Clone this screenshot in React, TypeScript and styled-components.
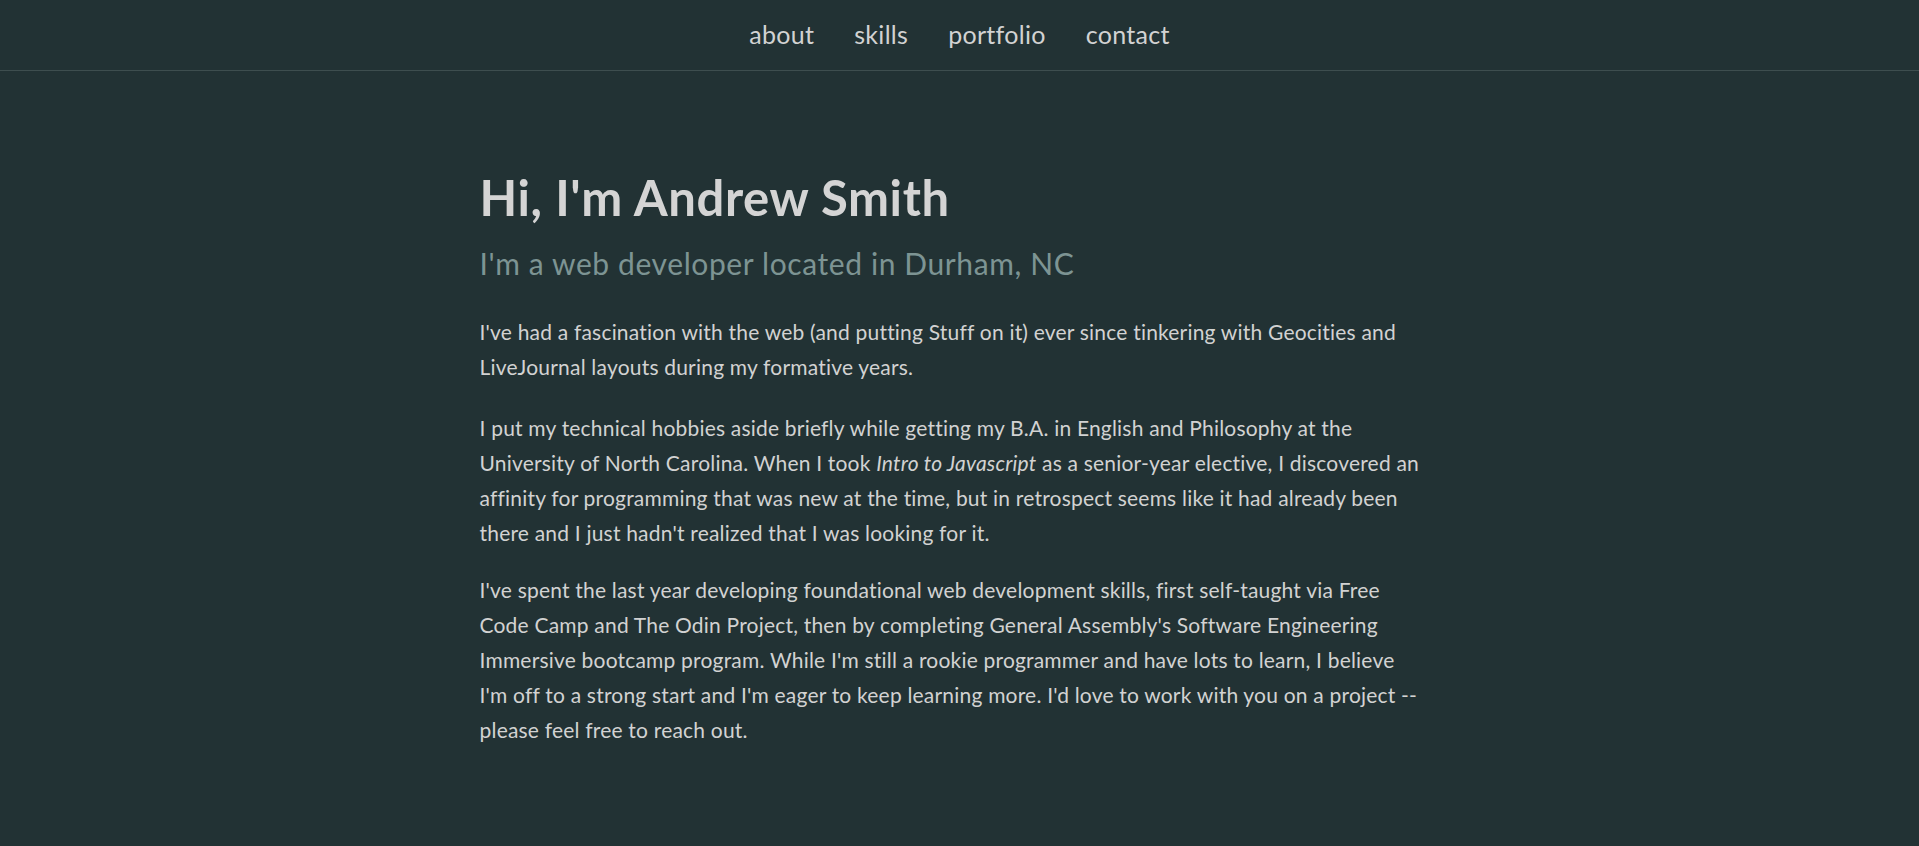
import React from "react";
import styled, { createGlobalStyle } from "styled-components";

const GlobalStyle = createGlobalStyle`
  html, body {
    margin: 0;
    padding: 0;
    background: #223234;
  }
  body {
    font-family: Lato, "Noto Sans", "DejaVu Sans", sans-serif;
    color: #d2d2d2;
  }
`;

const Page = styled.div`
  min-height: 846px;
  background: #223234;
`;

const Header = styled.header`
  height: 70px;
  border-bottom: 1px solid #3e4e4f;
  display: flex;
  align-items: center;
  justify-content: center;
`;

const Nav = styled.nav`
  display: flex;
  gap: 40px;
  padding-bottom: 2px;
`;

const NavLink = styled.a`
  font-size: 25px;
  letter-spacing: 0.3px;
  color: #d2d2d2;
  text-decoration: none;
  cursor: pointer;
`;

const Main = styled.main`
  max-width: 960px;
  margin: 0 auto;
  padding-top: 97px;
`;

const Title = styled.h1`
  margin: 0;
  font-size: 49px;
  letter-spacing: 0.6px;
  font-weight: 700;
  line-height: 1.2;
  color: #d4d4d4;
`;

const Subtitle = styled.h2`
  margin: 17px 0 31px;
  font-size: 30px;
  letter-spacing: 0.6px;
  font-weight: 400;
  line-height: 1.3;
  color: #7d9493;
`;

const Paragraph = styled.p<{ $gap?: number }>`
  max-width: 943px;
  margin: 0 0 ${(p) => p.$gap ?? 26}px;
  font-size: 21px;
  letter-spacing: 0.2px;
  line-height: 35px;
  color: #d2d2d2;
`;

const links = ["about", "skills", "portfolio", "contact"];

export default function App() {
  return (
    <Page>
      <GlobalStyle />
      <Header>
        <Nav>
          {links.map((l) => (
            <NavLink key={l} href={`#${l}`}>
              {l}
            </NavLink>
          ))}
        </Nav>
      </Header>
      <Main>
        <Title>Hi, I'm Andrew Smith</Title>
        <Subtitle>I'm a web developer located in Durham, NC</Subtitle>
        <Paragraph>
          I've had a fascination with the web (and putting Stuff on it) ever
          since tinkering with Geocities and LiveJournal layouts during my
          formative years.
        </Paragraph>
        <Paragraph $gap={22}>
          I put my technical hobbies aside briefly while getting my B.A. in
          English and Philosophy at the University of North Carolina. When I
          took <em>Intro to Javascript</em> as a senior-year elective, I
          discovered an affinity for programming that was new at the time, but
          in retrospect seems like it had already been there and I just hadn't
          realized that I was looking for it.
        </Paragraph>
        <Paragraph>
          I've spent the last year developing foundational web development
          skills, first self-taught via Free Code Camp and The Odin Project,
          then by completing General Assembly's Software Engineering Immersive
          bootcamp program. While I'm still a rookie programmer and have lots to
          learn, I believe I'm off to a strong start and I'm eager to keep
          learning more. I'd love to work with you on a project -- please feel
          free to reach out.
        </Paragraph>
      </Main>
    </Page>
  );
}
